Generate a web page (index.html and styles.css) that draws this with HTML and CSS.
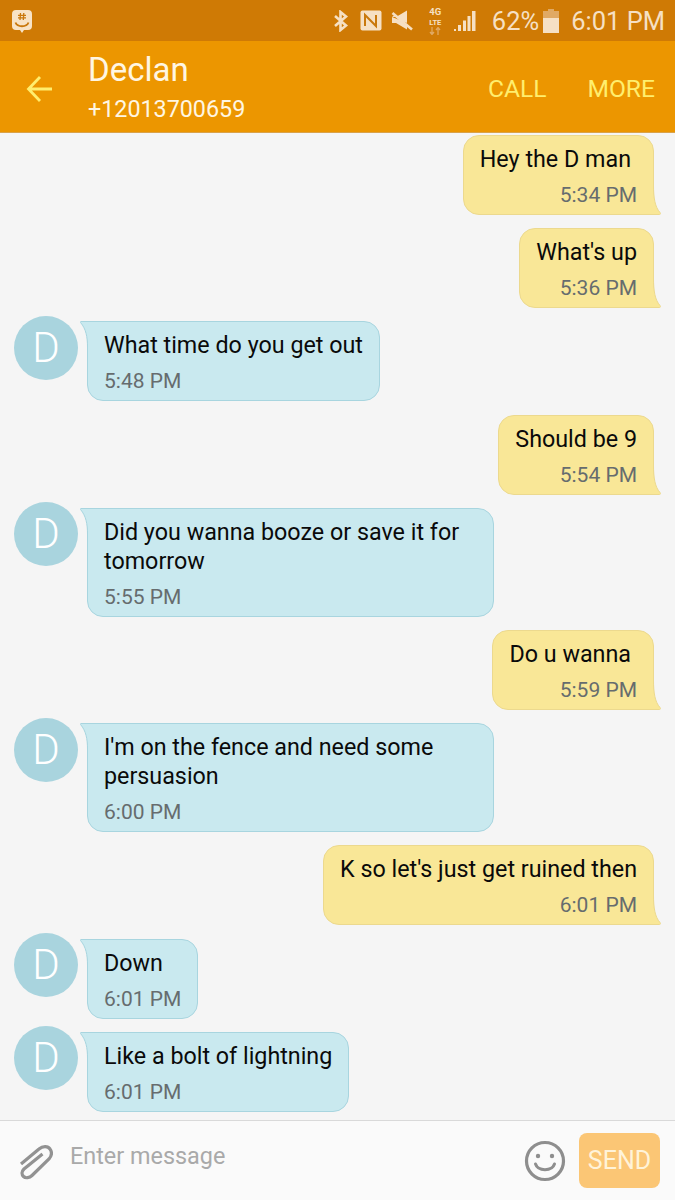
FILE: index.html
```html
<!DOCTYPE html>
<html lang="en">
<head>
  <meta charset="UTF-8">
  <meta name="viewport" content="width=device-width, initial-scale=1.0">
  <title>Declan</title>
  <link rel="stylesheet" href="styles.css">
</head>
<body>
  <svg class="defs" width="0" height="0">
    <symbol id="tail-out" viewBox="0 0 16 30">
      <path d="M6 0 H8.5 C8.5 13 10 22 15 27.5 C15.8 28.4 15.6 29.5 14.5 29.5 H6 Z" fill="#f9e797"/>
      <path d="M8.5 0 C8.5 13 10 22 15 27.5 C15.8 28.4 15.6 29.5 14.5 29.5 H6" fill="none" stroke="#ecd98e" stroke-width="1"/>
    </symbol>
    <symbol id="tail-in" viewBox="0 0 16 30">
      <path d="M1 0.5 H16 V26 H7.5 C7.5 16 6 8 0.5 1.5 Z" fill="#c9e9ef"/>
      <path d="M16 0.5 H1 C0.3 0.5 0.2 1.2 0.6 1.6 C6 8 7.5 16 7.5 26" fill="none" stroke="#a8d5df" stroke-width="1"/>
    </symbol>
  </svg>

  <div class="app">
    <div class="statusbar">
      <svg class="app-logo" width="22" height="25" viewBox="0 0 22 25">
        <path d="M5 1 H17 A4 4 0 0 1 21 5 V17 A4 4 0 0 1 17 21 H13 L11 24 L9 21 H5 A4 4 0 0 1 1 17 V5 A4 4 0 0 1 5 1 Z" fill="#f8e3c6"/>
        <path d="M9.5 4 L9 11 M12.8 4 L12.3 11 M7 6.3 H15 M7 8.8 H15" stroke="#c9780c" stroke-width="1.3" fill="none"/>
        <path d="M4.5 13.5 C6.5 18.5 15.5 18.5 17.5 13.5" stroke="#c9780c" stroke-width="1.9" fill="none"/>
      </svg>
      <div class="status-right">
        <svg class="st-bt" width="16" height="22" viewBox="0 0 16 22">
          <path d="M2 6 L13 15.5 L7.5 20 V2 L13 6.5 L2 16" fill="none" stroke="#f6e0c4" stroke-width="2.6"/>
        </svg>
        <svg class="st-nfc" width="22" height="21" viewBox="0 0 22 21">
          <rect x="0.5" y="0.5" width="21" height="20" rx="2" fill="#f6e0c4"/>
          <path d="M5 16 V5 L16 16 V5" fill="none" stroke="#c9780c" stroke-width="2"/>
        </svg>
        <svg class="st-mute" width="22" height="21" viewBox="0 0 22 21">
          <path d="M1 7 H5 L16 0.5 V13 Z M1 7 V13 H5 L16 19.5 V16 L3 5.5 Z" fill="#f6e0c4"/>
          <path d="M1.5 3 L21 19.5" stroke="#f6e0c4" stroke-width="2.6"/>
        </svg>
        <div class="st-net">
          <span>4G</span>
          <span class="lte">LTE</span>
          <svg width="12" height="8" viewBox="0 0 12 8">
            <path d="M3 0 V7 M1 5 L3 7.5 L5 5 M9 8 V1 M7 3 L9 0.5 L11 3" fill="none" stroke="#e0a964" stroke-width="1.3"/>
          </svg>
        </div>
        <svg class="st-signal" width="22" height="22" viewBox="0 0 22 22">
          <path d="M0 21 H2 V19 H0 Z M4 21 H7 V15 H4 Z M9 21 H12 V10.5 H9 Z M13.5 21 H16.5 V6 H13.5 Z M18 21 H21.5 V1 H18 Z" fill="#f6e0c4"/>
        </svg>
        <span class="st-pct">62%</span>
        <svg class="st-batt" width="16" height="24" viewBox="0 0 16 24">
          <path d="M5 0 H11 V2 H16 V24 H0 V2 H5 Z" fill="#e0a964"/>
          <path d="M0 9 H16 V24 H0 Z" fill="#f6e0c4"/>
        </svg>
        <span class="st-time">6:01 PM</span>
      </div>
    </div>

    <header class="topbar">
      <svg class="back" width="28" height="28" viewBox="0 0 28 28">
        <path d="M26 14 H3 M14 2 L2.5 14 L14 26" fill="none" stroke="#ffee6e" stroke-width="2.8"/>
      </svg>
      <div class="contact">
        <div class="contact-name">Declan</div>
        <div class="contact-num">+12013700659</div>
      </div>
      <div class="actions">
        <span>CALL</span>
        <span>MORE</span>
      </div>
    </header>

    <main class="thread">
      <div class="msg out">
        <div class="bubble"><svg class="tail"><use href="#tail-out"/></svg><p class="text pad">Hey the D man</p><p class="time">5:34 PM</p></div>
      </div>
      <div class="msg out">
        <div class="bubble"><svg class="tail"><use href="#tail-out"/></svg><p class="text">What's up</p><p class="time">5:36 PM</p></div>
      </div>
      <div class="msg in">
        <div class="avatar">D</div>
        <div class="bubble"><svg class="tail"><use href="#tail-in"/></svg><p class="text">What time do you get out</p><p class="time">5:48 PM</p></div>
      </div>
      <div class="msg out">
        <div class="bubble"><svg class="tail"><use href="#tail-out"/></svg><p class="text">Should be 9</p><p class="time">5:54 PM</p></div>
      </div>
      <div class="msg in">
        <div class="avatar">D</div>
        <div class="bubble"><svg class="tail"><use href="#tail-in"/></svg><p class="text">Did you wanna booze or save it for tomorrow</p><p class="time">5:55 PM</p></div>
      </div>
      <div class="msg out">
        <div class="bubble"><svg class="tail"><use href="#tail-out"/></svg><p class="text pad">Do u wanna</p><p class="time">5:59 PM</p></div>
      </div>
      <div class="msg in">
        <div class="avatar">D</div>
        <div class="bubble"><svg class="tail"><use href="#tail-in"/></svg><p class="text">I'm on the fence and need some persuasion</p><p class="time">6:00 PM</p></div>
      </div>
      <div class="msg out">
        <div class="bubble"><svg class="tail"><use href="#tail-out"/></svg><p class="text">K so let's just get ruined then</p><p class="time">6:01 PM</p></div>
      </div>
      <div class="msg in">
        <div class="avatar">D</div>
        <div class="bubble"><svg class="tail"><use href="#tail-in"/></svg><p class="text">Down</p><p class="time">6:01 PM</p></div>
      </div>
      <div class="msg in">
        <div class="avatar">D</div>
        <div class="bubble"><svg class="tail"><use href="#tail-in"/></svg><p class="text">Like a bolt of lightning</p><p class="time">6:01 PM</p></div>
      </div>
    </main>

    <footer class="composer">
      <svg class="clip" width="34" height="36" viewBox="0 0 34 36">
        <path d="M2 20 L20 5 C24 1.5 29 2 31 5 C33.5 8.5 32.5 12 30 15 L13 31.5 C10.5 34 6.5 34.5 4.5 32.5 C2.5 30.5 2.5 27.5 5 25 L23.5 10" fill="none" stroke="#929292" stroke-width="3.2"/>
      </svg>
      <div class="placeholder">Enter message</div>
      <svg class="smiley" width="42" height="42" viewBox="0 0 42 42">
        <circle cx="21" cy="21" r="18.5" fill="none" stroke="#8e8e8e" stroke-width="3.2"/>
        <circle cx="14" cy="16" r="2.2" fill="#8e8e8e"/>
        <circle cx="28" cy="16" r="2.2" fill="#8e8e8e"/>
        <path d="M11.5 24 C14 31.5 28 31.5 30.5 24" fill="none" stroke="#8e8e8e" stroke-width="3" stroke-linecap="round"/>
      </svg>
      <button class="send" type="button">SEND</button>
    </footer>
  </div>
</body>
</html>
```

FILE: styles.css
```css
* {
  margin: 0;
  padding: 0;
  box-sizing: border-box;
}

body {
  font-family: Roboto, "Liberation Sans", sans-serif;
  background-color: #f5f5f5;
}

.defs {
  position: absolute;
}

.app {
  width: 675px;
  height: 1200px;
  display: flex;
  flex-direction: column;
  overflow: hidden;
}

/* status bar */
.statusbar {
  height: 41px;
  background-color: #cf7a05;
  color: #f6e0c4;
  display: flex;
  align-items: center;
  justify-content: space-between;
  padding: 0 10px 0 11px;
  flex-shrink: 0;
}

.app-logo {
  margin-top: 2px;
}

.status-right {
  display: flex;
  align-items: center;
}

.st-bt {
  margin-right: 11px;
}

.st-nfc {
  margin-right: 9px;
}

.st-mute {
  margin-right: 15px;
}

.st-net {
  width: 15px;
  display: flex;
  flex-direction: column;
  align-items: center;
  font-size: 9.5px;
  font-weight: 700;
  line-height: 11.5px;
  margin-right: 11px;
}

.st-net .lte {
  font-size: 7.5px;
  line-height: 9px;
}

.st-signal {
  flex-shrink: 0;
}

.st-pct {
  font-size: 25.5px;
  margin-left: 16px;
}

.st-batt {
  margin-left: 4px;
}

.st-time {
  font-size: 25.5px;
  margin-left: 12px;
}

/* header */
.topbar {
  height: 92px;
  background-color: #ec9600;
  display: flex;
  align-items: center;
  padding: 0 20px 0 26px;
  border-bottom: 1px solid #d9a24a;
  flex-shrink: 0;
}

.back {
  margin-right: 34px;
  margin-top: 4px;
}

.contact {
  flex: 1;
  display: flex;
  flex-direction: column;
  gap: 2px;
  color: #fff6e3;
}

.contact-name {
  font-size: 33px;
  line-height: 43px;
}

.contact-num {
  font-size: 23.3px;
  line-height: 33px;
}

.actions {
  display: flex;
  gap: 41px;
  color: #ffee6e;
  font-size: 24.6px;
  margin-top: 4px;
}

/* messages */
.thread {
  flex: 1;
  padding: 0 21px 0 14px;
  display: flex;
  flex-direction: column;
  overflow: hidden;
}

.msg {
  display: flex;
  padding-top: 13.2px;
  flex-shrink: 0;
}

.msg:first-child {
  padding-top: 2px;
}

.msg.out {
  justify-content: flex-end;
}

.msg.in {
  padding-top: 7.8px;
}

.avatar {
  width: 64px;
  height: 64px;
  border-radius: 50%;
  background-color: #a9d4de;
  color: #fff;
  font-size: 42px;
  font-weight: 300;
  line-height: 64px;
  text-align: center;
  flex-shrink: 0;
  margin-right: 9px;
}

.bubble {
  position: relative;
  max-width: 407px;
  padding: 9px 16px 0;
  border-radius: 16px;
  border: 1px solid;
}

.out .bubble {
  background-color: #f9e797;
  border-color: #ecd98e;
  border-bottom-right-radius: 0;
}

.in .bubble {
  background-color: #c9e9ef;
  border-color: #a8d5df;
  border-top-left-radius: 0;
  margin-top: 5.4px;
}

.tail {
  position: absolute;
  width: 16px;
  height: 30px;
}

.out .tail {
  right: -8px;
  bottom: -1px;
}

.in .tail {
  left: -8px;
  top: -1px;
}

.text {
  font-size: 23.3px;
  line-height: 29px;
  color: #0a0a0a;
}

.text.pad {
  padding-right: 6px;
}

.time {
  font-size: 21px;
  line-height: 37px;
  margin-top: 3px;
  color: #666c6e;
}

.out .time {
  text-align: right;
}

/* composer */
.composer {
  height: 80px;
  background-color: #fafafa;
  border-top: 1px solid #d9d9d9;
  display: flex;
  align-items: center;
  padding: 0 15px 0 19px;
  flex-shrink: 0;
}

.clip {
  margin-top: 2px;
}

.placeholder {
  flex: 1;
  margin-left: 17px;
  margin-bottom: 10px;
  font-size: 23.4px;
  color: #a9a9a9;
}

.smiley {
  margin-right: 13px;
}

.send {
  width: 81px;
  height: 55px;
  border: none;
  border-radius: 8px;
  background-color: #fbc675;
  color: #fff3d9;
  font-family: inherit;
  font-size: 25px;
}
```
